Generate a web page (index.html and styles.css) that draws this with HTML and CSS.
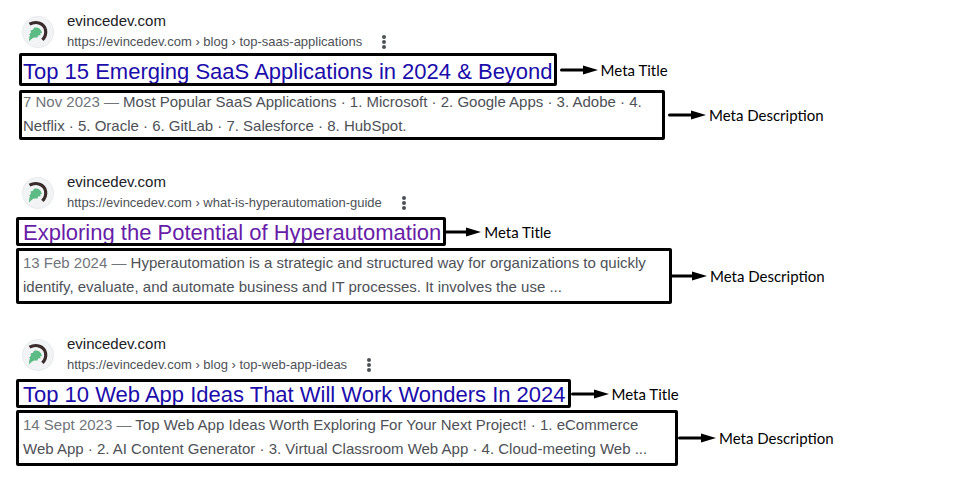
FILE: index.html
```
<!DOCTYPE html>
<html lang="en">
<head>
    <meta charset="UTF-8">
    <meta name="viewport" content="width=device-width, initial-scale=1.0">
    <title>Meta Title and Meta Description</title>
    <link rel="stylesheet" href="styles.css">
</head>
<body>
    <!-- Shared icons -->
    <svg class="icon-defs" aria-hidden="true">
        <symbol id="logo" viewBox="0 0 30 30">
            <path d="M6.500 7.200C13 3.600 21.500 6 22.600 13.200c.6 4-.6 7-3.200 9.600" fill="none" stroke="#3a2c2d" stroke-width="3.200"/>
            <path d="M6 24.500C6 22 6.200 20 7 18.500L6.200 17.800 8 15.500 7.500 13.500 10 12.800 11 10.800C14.500 9.800 18 11.500 19 16L17.200 16.200 17.600 18.200 15 18.600 14.600 20.600 12 20.400C9.500 20.600 8 22 6 24.500z" fill="#5cbb84"/>
        </symbol>
        <symbol id="arrow" viewBox="0 0 38 10" preserveAspectRatio="xMaxYMid slice">
            <path d="M1.500 5h24" stroke="#000" stroke-width="3" stroke-linecap="round"/>
            <path d="M23 0.500L38 5 23 9.500z" fill="#000"/>
        </symbol>
    </svg>

    <main class="results">
        <article class="result result-tight">
            <div class="result-header">
                <svg class="favicon"><use href="#logo"/></svg>
                <div class="site">
                    <div class="site-name">evincedev.com</div>
                    <div class="site-url">
                        <span>https://evincedev.com › blog › top-saas-applications</span>
                        <button class="menu-btn" aria-label="About this result"><i></i><i></i><i></i></button>
                    </div>
                </div>
            </div>
            <div class="row">
                <h3 class="frame title"><a href="#">Top 15 Emerging SaaS Applications in 2024 &amp; Beyond</a></h3>
                <svg class="arrow"><use href="#arrow"/></svg>
                <span class="label">Meta Title</span>
            </div>
            <div class="row">
                <p class="frame description"><span class="date">7 Nov 2023 — </span>Most Popular SaaS Applications · 1. Microsoft · 2. Google Apps · 3. Adobe · 4. Netflix · 5. Oracle · 6. GitLab · 7. Salesforce · 8. HubSpot.</p>
                <svg class="arrow"><use href="#arrow"/></svg>
                <span class="label">Meta Description</span>
            </div>
        </article>

        <article class="result">
            <div class="result-header">
                <svg class="favicon"><use href="#logo"/></svg>
                <div class="site">
                    <div class="site-name">evincedev.com</div>
                    <div class="site-url">
                        <span>https://evincedev.com › what-is-hyperautomation-guide</span>
                        <button class="menu-btn" aria-label="About this result"><i></i><i></i><i></i></button>
                    </div>
                </div>
            </div>
            <div class="row">
                <h3 class="frame title visited"><a href="#">Exploring the Potential of Hyperautomation</a></h3>
                <svg class="arrow"><use href="#arrow"/></svg>
                <span class="label">Meta Title</span>
            </div>
            <div class="row">
                <p class="frame description"><span class="date">13 Feb 2024 — </span>Hyperautomation is a strategic and structured way for organizations to quickly identify, evaluate, and automate business and IT processes. It involves the use ...</p>
                <svg class="arrow"><use href="#arrow"/></svg>
                <span class="label">Meta Description</span>
            </div>
        </article>

        <article class="result result-wide">
            <div class="result-header">
                <svg class="favicon"><use href="#logo"/></svg>
                <div class="site">
                    <div class="site-name">evincedev.com</div>
                    <div class="site-url">
                        <span>https://evincedev.com › blog › top-web-app-ideas</span>
                        <button class="menu-btn" aria-label="About this result"><i></i><i></i><i></i></button>
                    </div>
                </div>
            </div>
            <div class="row">
                <h3 class="frame title"><a href="#">Top 10 Web App Ideas That Will Work Wonders In 2024</a></h3>
                <svg class="arrow"><use href="#arrow"/></svg>
                <span class="label">Meta Title</span>
            </div>
            <div class="row">
                <p class="frame description"><span class="date">14 Sept 2023 — </span>Top Web App Ideas Worth Exploring For Your Next Project! · 1. eCommerce Web App · 2. AI Content Generator · 3. Virtual Classroom Web App · 4. Cloud-meeting Web ...</p>
                <svg class="arrow"><use href="#arrow"/></svg>
                <span class="label">Meta Description</span>
            </div>
        </article>
    </main>
</body>
</html>
```
FILE: styles.css
```
body {
    margin: 0;
    background-color: #fff;
    font-family: "Liberation Sans", Arial, sans-serif;
}

.icon-defs {
    display: block;
    width: 0;
    height: 0;
}

.results {
    display: flex;
    flex-direction: column;
    gap: 28px;
    padding: 11px 16px;
}

.result-header {
    display: flex;
    align-items: center;
    gap: 14px;
    padding-left: 7px;
    margin-bottom: 4px;
}

.favicon {
    width: 30px;
    height: 30px;
    border-radius: 50%;
    background-color: #f1f3f4;
    box-shadow: 0 0 0 1px #e9ebee;
}

.site-name {
    font-size: 15px;
    line-height: 20px;
    color: #202124;
}

.site-url {
    display: flex;
    align-items: center;
    gap: 18px;
    font-size: 13px;
    line-height: 21px;
    color: #4d5156;
}

.menu-btn {
    display: flex;
    flex-direction: column;
    gap: 1px;
    padding: 0 2px;
    border: none;
    background: none;
    cursor: pointer;
}

.menu-btn i {
    width: 4px;
    height: 4px;
    border-radius: 50%;
    background-color: #4d5156;
}

.row {
    display: flex;
    align-items: center;
    margin-bottom: 2px;
}

/* the outline is drawn inside the box so it takes no room from the text */
.frame {
    margin: 0;
    outline: 3px solid #000;
    outline-offset: -3px;
    border-radius: 2px;
}

.title {
    padding: 3px 5px 0 7px;
    font-size: 22px;
    font-weight: normal;
    line-height: 26px;
}

.title a {
    color: #1a0dab;
    text-decoration: none;
}

.title.visited a {
    color: #681da8;
}

.description {
    box-sizing: border-box;
    width: 656px;
    padding: 3px 6px 5px 7px;
    font-size: 15px;
    line-height: 24px;
    color: #4d5156;
}

.date {
    color: #70757a;
}

.arrow {
    flex: none;
    width: 35px;
    height: 10px;
    margin-right: 3px;
}

.label {
    font-family: Lato, sans-serif;
    font-size: 15px;
    line-height: 20px;
    color: #000;
    white-space: nowrap;
}

.result-tight .row {
    padding-left: 3px;
    margin-bottom: 4px;
}

.result-tight .title {
    padding: 6px 4px 1px;
}

.result-tight .description {
    width: 646px;
    padding: 0 4px 2px;
}

.result-tight .result-header {
    margin-bottom: 1px;
}

.result-tight .arrow {
    width: 38px;
    margin-left: 3px;
}

.result-wide .description {
    width: 662px;
}

.result-wide .arrow {
    width: 38px;
}
```
